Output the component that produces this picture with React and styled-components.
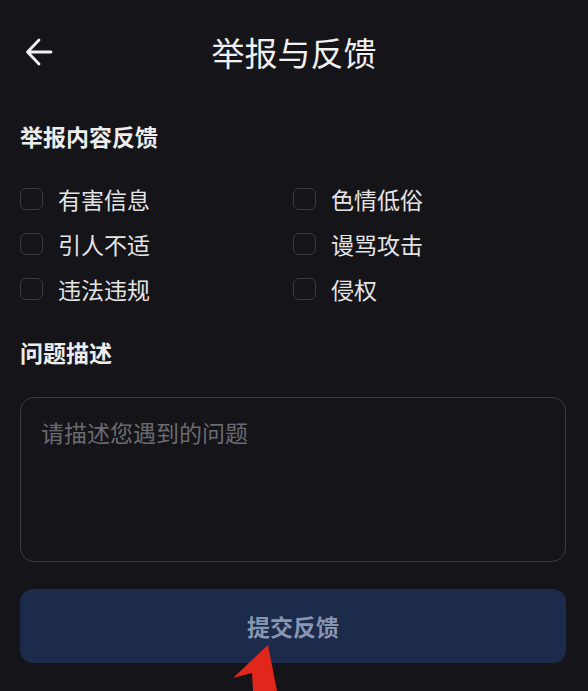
import React from "react";
import styled, { createGlobalStyle } from "styled-components";

const Global = createGlobalStyle`
  html, body { margin: 0; padding: 0; background: #151419; }
  body { font-family: "Noto Sans CJK SC", "Noto Sans", sans-serif; }
  * { box-sizing: border-box; }
`;

const Page = styled.div`
  position: relative;
  width: 588px;
  height: 691px;
  overflow: hidden;
  background: #151419;
  color: #ececec;
  padding: 0 22px 0 20px;
`;

const Header = styled.header`
  height: 104px;
  display: grid;
  grid-template-columns: 60px 1fr 60px;
  align-items: center;
  margin: 0 -2px 0 0;
`;

const BackButton = styled.button`
  width: 40px;
  height: 40px;
  margin-left: 5px;
  padding: 0;
  border: none;
  background: transparent;
  display: flex;
  align-items: center;
  color: #f2f2f2;
`;

const Title = styled.h1`
  margin: 0;
  text-align: center;
  font-size: 33px;
  line-height: 40px;
  font-weight: 400;
  color: #f0f0f0;
`;

const SectionTitle = styled.h2`
  margin: ${(p) => p.$top}px 0 0;
  font-size: 23px;
  line-height: 32px;
  font-weight: 700;
  color: #ededed;
`;

const OptionGrid = styled.div`
  margin-top: 24px;
  display: grid;
  grid-template-columns: 1fr 1fr;
  grid-auto-rows: 45px;
`;

const Option = styled.label`
  display: flex;
  align-items: center;
  gap: 15px;
  font-size: 23px;
  color: #e4e4e4;
`;

const Box = styled.span`
  width: 23px;
  height: 22px;
  border: 1.5px solid #3a3a3f;
  border-radius: 6px;
  flex: none;
`;

const TextArea = styled.div`
  margin-top: 29px;
  height: 165px;
  border: 1.5px solid #3b3b40;
  border-radius: 14px;
  padding: 19px 20px;
  font-size: 23px;
  line-height: 30px;
  color: #6a6a70;
`;

const Submit = styled.button`
  margin-top: 27px;
  width: 100%;
  height: 74px;
  border: none;
  border-radius: 13px;
  background: #1c2b4b;
  color: #8996b1;
  font-family: inherit;
  font-size: 23px;
  font-weight: 600;
  display: flex;
  align-items: center;
  justify-content: center;
`;

const Annotation = styled.svg`
  position: absolute;
  left: 220px;
  top: 640px;
  width: 70px;
  height: 51px;
`;

const options = [
  "有害信息",
  "色情低俗",
  "引人不适",
  "谩骂攻击",
  "违法违规",
  "侵权",
];

export default function App() {
  return (
    <>
      <Global />
      <Page>
        <Header>
          <BackButton aria-label="返回">
            <svg width="28" height="30" viewBox="0 0 28 30" fill="none">
              <path
                d="M26 15H3M14 3L2.5 15L14 27"
                stroke="currentColor"
                strokeWidth="2.8"
                strokeLinecap="round"
                strokeLinejoin="round"
              />
            </svg>
          </BackButton>
          <Title>举报与反馈</Title>
          <span />
        </Header>
        <SectionTitle $top={16}>举报内容反馈</SectionTitle>
        <OptionGrid>
          {options.map((o) => (
            <Option key={o}>
              <Box />
              {o}
            </Option>
          ))}
        </OptionGrid>
        <SectionTitle $top={25}>问题描述</SectionTitle>
        <TextArea>请描述您遇到的问题</TextArea>
        <Submit>提交反馈</Submit>
        <Annotation viewBox="0 0 70 51">
          <path
            d="M48 5 L57 51 L33 51 L32 33 L13 38 Z"
            fill="#e1261c"
          />
        </Annotation>
      </Page>
    </>
  );
}
